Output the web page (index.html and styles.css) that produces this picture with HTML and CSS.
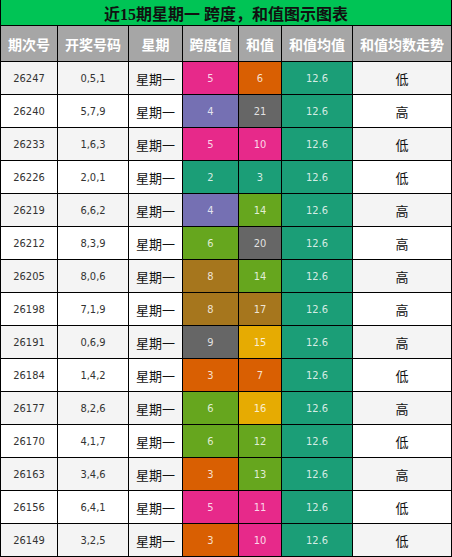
FILE: index.html
```html
<!DOCTYPE html>
<html lang="zh-CN">
<head>
    <meta charset="UTF-8">
    <meta name="viewport" content="width=device-width, initial-scale=1.0">
    <title>近15期星期一 跨度，和值图示图表</title>
    <link rel="stylesheet" href="styles.css">
</head>
<body>
    <div class="chart" id="chart">
        <div class="cell title">近15期星期一 跨度，和值图示图表</div>
        <div class="cell head first">期次号</div>
        <div class="cell head">开奖号码</div>
        <div class="cell head">星期</div>
        <div class="cell head">跨度值</div>
        <div class="cell head">和值</div>
        <div class="cell head">和值均值</div>
        <div class="cell head">和值均数走势</div>
    </div>

    <script>
        // 开奖数据：期次号, 号码, 跨度, 和值, 走势
        const rows = [
            ['26247', '0,5,1', 5, 6, '低'],
            ['26240', '5,7,9', 4, 21, '高'],
            ['26233', '1,6,3', 5, 10, '低'],
            ['26226', '2,0,1', 2, 3, '低'],
            ['26219', '6,6,2', 4, 14, '高'],
            ['26212', '8,3,9', 6, 20, '高'],
            ['26205', '8,0,6', 8, 14, '高'],
            ['26198', '7,1,9', 8, 17, '高'],
            ['26191', '0,6,9', 9, 15, '高'],
            ['26184', '1,4,2', 3, 7, '低'],
            ['26177', '8,2,6', 6, 16, '高'],
            ['26170', '4,1,7', 6, 12, '低'],
            ['26163', '3,4,6', 3, 13, '高'],
            ['26156', '6,4,1', 5, 11, '低'],
            ['26149', '3,2,5', 3, 10, '低']
        ];

        // 跨度颜色
        const spanColor = {2: 'teal', 3: 'orange', 4: 'purple', 5: 'pink', 6: 'green', 8: 'brown', 9: 'gray'};

        // 和值颜色
        function sumColor(v) {
            if (v <= 5) return 'teal';
            if (v <= 9) return 'orange';
            if (v <= 11) return 'pink';
            if (v <= 14) return 'green';
            if (v <= 16) return 'gold';
            if (v <= 19) return 'brown';
            return 'gray';
        }

        const chart = document.getElementById('chart');

        function addCell(text, cls) {
            const div = document.createElement('div');
            div.className = 'cell ' + cls;
            div.textContent = text;
            chart.appendChild(div);
        }

        rows.forEach((r, i) => {
            const shade = i % 2 === 0 ? 'shade' : 'plain';
            addCell(r[0], 'num first ' + shade);
            addCell(r[1], 'num ' + shade);
            addCell('星期一', 'week ' + shade);
            addCell(r[2], 'num color ' + spanColor[r[2]]);
            addCell(r[3], 'num color ' + sumColor(r[3]));
            addCell('12.6', 'num color teal');
            addCell(r[4], 'week ' + shade);
        });
    </script>
</body>
</html>
```

FILE: styles.css
```css
body {
    margin: 0;
    background-color: #fff;
}
.chart {
    display: grid;
    grid-template-columns: 58px 71px 54px 56px 43px 71px 99px;
    grid-template-rows: 26px 36px;
    grid-auto-rows: 33px;
    width: 452px;
}
.cell {
    box-sizing: border-box;
    display: flex;
    align-items: center;
    justify-content: center;
    border-right: 1px solid #000;
    border-bottom: 1px solid #000;
    white-space: nowrap;
    overflow: hidden;
}
.first {
    border-left: 1px solid #000;
}
.title {
    grid-column: 1 / -1;
    border-left: 1px solid #000;
    background-color: #00c455;
    color: #111;
    font-family: "Liberation Serif", "Noto Sans CJK SC", serif;
    font-size: 16px;
    font-weight: bold;
}
.head {
    background-color: #a6a6a6;
    color: #fff;
    font-family: "Noto Sans CJK SC", sans-serif;
    font-size: 14px;
    font-weight: bold;
}
.num {
    font-family: "DejaVu Sans Condensed", "DejaVu Sans", "Liberation Sans", sans-serif;
    font-stretch: condensed;
    font-size: 11px;
    color: #333;
}
.week {
    font-family: "Noto Sans CJK SC", sans-serif;
    font-size: 13px;
    color: #111;
}
.shade { background-color: #f4f4f4; }
.plain { background-color: #fff; }
.color { color: rgba(255, 255, 255, 0.82); }
.teal { background-color: #1b9e77; }
.orange { background-color: #d95f02; }
.purple { background-color: #7570b3; }
.pink { background-color: #e7298a; }
.green { background-color: #66a61e; }
.gold { background-color: #e6ab02; }
.brown { background-color: #a6761d; }
.gray { background-color: #666666; }
```
